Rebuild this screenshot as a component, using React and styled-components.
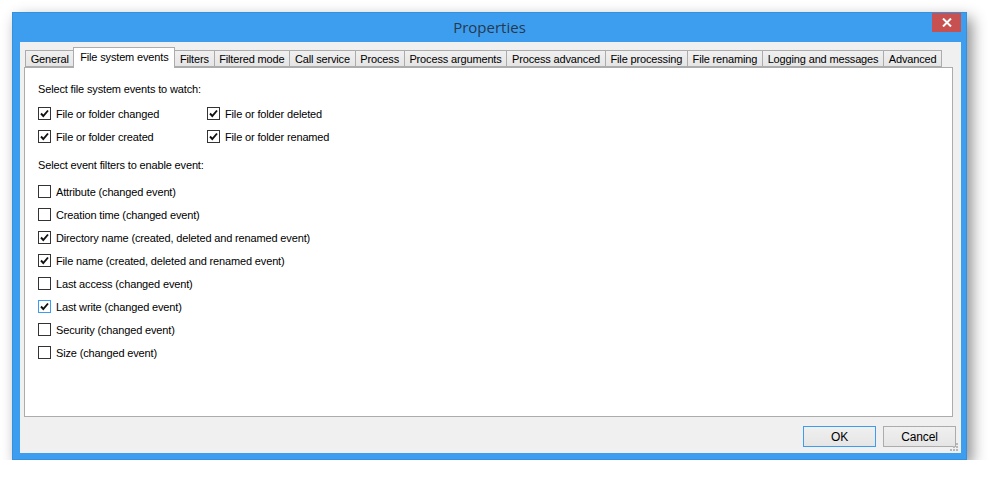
import styled, { createGlobalStyle } from "styled-components";

const GlobalStyle = createGlobalStyle`
  body {
    margin: 0;
    background: #ffffff;
    font-family: "Liberation Sans", Arial, sans-serif;
    font-size: 11px;
    letter-spacing: -0.15px;
    color: #000;
  }
`;

const Page = styled.div`
  padding: 12px 0 0 12px;
`;

const Window = styled.div`
  width: 955px;
  height: 448px;
  box-sizing: border-box;
  background: #3d9ef0;
  border: 1px solid #3590e0;
  box-shadow: 5px 6px 14px rgba(0, 0, 0, 0.45);
  display: flex;
  flex-direction: column;
`;

const TitleBar = styled.div`
  height: 29px;
  display: grid;
  grid-template-columns: 1fr auto 1fr;
  align-items: start;
`;

const Title = styled.div`
  grid-column: 2;
  line-height: 29px;
  font-size: 15px;
  letter-spacing: 0;
  color: #27394c;
  font-family: "Open Sans", "Liberation Sans", sans-serif;
`;

const CloseButton = styled.div`
  grid-column: 3;
  justify-self: end;
  margin-right: 5px;
  width: 29px;
  height: 19px;
  background: #c75050;
  display: flex;
  align-items: center;
  justify-content: center;
`;

const Client = styled.div`
  flex: 1;
  margin: 0 5px 6px 7px;
  background: #f0f0f0;
  display: flex;
  flex-direction: column;
  padding: 5px 7px 0 4px;
  position: relative;
`;

const TabStrip = styled.div`
  display: flex;
  align-items: flex-end;
  height: 20px;
  padding-left: 2px;
  position: relative;
  z-index: 1;
`;

const Tab = styled.div`
  box-sizing: border-box;
  height: ${(p) => (p.$active ? "21px" : "17px")};
  margin-left: -1px;
  margin-bottom: ${(p) => (p.$active ? "-1px" : "0")};
  padding: ${(p) => (p.$active ? "0 5.7px 2px" : "0 4.7px")};
  border: 1px solid #acacac;
  border-bottom: ${(p) => (p.$active ? "none" : "1px solid #acacac")};
  background: ${(p) => (p.$active ? "#ffffff" : "linear-gradient(#f0f0f0, #e5e5e5)")};
  display: flex;
  align-items: center;
  white-space: nowrap;
  position: relative;
  z-index: ${(p) => (p.$active ? 2 : 0)};
`;

const Panel = styled.div`
  width: 929px;
  height: 350px;
  box-sizing: border-box;
  background: #ffffff;
  border: 1px solid #acacac;
  padding: 14px 12px 0 13px;
`;

const Heading = styled.div`
  height: 15px;
  line-height: 15px;
  margin-bottom: ${(p) => p.$gap}px;
`;

const EventGrid = styled.div`
  display: grid;
  grid-template-columns: 169px 200px;
  row-gap: 8px;
  margin-bottom: 14px;
`;

const FilterList = styled.div`
  display: flex;
  flex-direction: column;
  gap: 8px;
`;

const Row = styled.label`
  display: flex;
  align-items: center;
  gap: 5px;
  height: 15px;
  white-space: nowrap;
`;

const Box = styled.span`
  width: 13px;
  height: 13px;
  box-sizing: border-box;
  border: 1px solid ${(p) => (p.$focus ? "#3c9cf0" : "#333333")};
  background: #ffffff;
  display: flex;
  align-items: center;
  justify-content: center;
`;

const Footer = styled.div`
  flex: 1;
  display: flex;
  justify-content: flex-end;
  align-items: flex-start;
  gap: 7px;
  padding-top: 9px;
  margin-right: -2px;
`;

const Button = styled.div`
  width: 73px;
  height: 21px;
  box-sizing: border-box;
  border: 1px solid ${(p) => (p.$default ? "#3c9cf0" : "#acacac")};
  background: linear-gradient(#f0f0f0, #e5e5e5);
  display: flex;
  align-items: center;
  justify-content: center;
  font-size: 12px;
`;

const Grip = styled.svg`
  position: absolute;
  right: 2px;
  bottom: 1px;
`;

const Check = () => (
  <svg width="9" height="9" viewBox="0 0 9 9">
    <path d="M1 4.5 L3.3 7 L8 1.5" fill="none" stroke="#111" strokeWidth="1.9" />
  </svg>
);

const Checkbox = ({ checked, focus, children }) => (
  <Row>
    <Box $focus={focus}>{checked && <Check />}</Box>
    {children}
  </Row>
);

const tabs = [
  "General",
  "File system events",
  "Filters",
  "Filtered mode",
  "Call service",
  "Process",
  "Process arguments",
  "Process advanced",
  "File processing",
  "File renaming",
  "Logging and messages",
  "Advanced",
];

const filters = [
  ["Attribute (changed event)", false],
  ["Creation time (changed event)", false],
  ["Directory name (created, deleted and renamed event)", true],
  ["File name (created, deleted and renamed event)", true],
  ["Last access (changed event)", false],
  ["Last write (changed event)", true, true],
  ["Security (changed event)", false],
  ["Size (changed event)", false],
];

const App = () => {
  return (
    <Page>
      <GlobalStyle />
      <Window>
        <TitleBar>
          <Title>Properties</Title>
          <CloseButton>
            <svg width="10" height="9" viewBox="0 0 10 9">
              <path d="M1 0.5 L9 8.5 M9 0.5 L1 8.5" stroke="#fff" strokeWidth="2" />
            </svg>
          </CloseButton>
        </TitleBar>
        <Client>
          <TabStrip>
            {tabs.map((t) => (
              <Tab key={t} $active={t === "File system events"}>
                {t}
              </Tab>
            ))}
          </TabStrip>
          <Panel>
            <Heading $gap={9}>Select file system events to watch:</Heading>
            <EventGrid>
              <Checkbox checked>File or folder changed</Checkbox>
              <Checkbox checked>File or folder deleted</Checkbox>
              <Checkbox checked>File or folder created</Checkbox>
              <Checkbox checked>File or folder renamed</Checkbox>
            </EventGrid>
            <Heading $gap={11}>Select event filters to enable event:</Heading>
            <FilterList>
              {filters.map(([label, checked, focus]) => (
                <Checkbox key={label} checked={checked} focus={focus}>
                  {label}
                </Checkbox>
              ))}
            </FilterList>
          </Panel>
          <Footer>
            <Button $default>OK</Button>
            <Button>Cancel</Button>
          </Footer>
          <Grip width="9" height="9" viewBox="0 0 9 9">
            <rect x="6" y="0" width="2" height="2" fill="#b8b8b8" />
            <rect x="3" y="3" width="2" height="2" fill="#b8b8b8" />
            <rect x="6" y="3" width="2" height="2" fill="#b8b8b8" />
            <rect x="0" y="6" width="2" height="2" fill="#b8b8b8" />
            <rect x="3" y="6" width="2" height="2" fill="#b8b8b8" />
            <rect x="6" y="6" width="2" height="2" fill="#b8b8b8" />
          </Grip>
        </Client>
      </Window>
    </Page>
  );
};

export default App;
